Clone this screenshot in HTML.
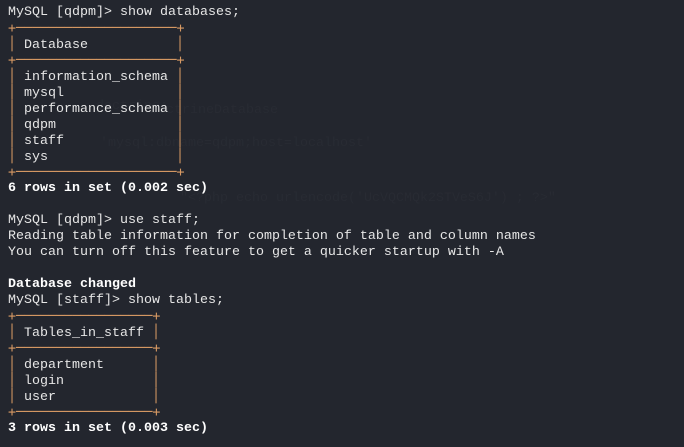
<!DOCTYPE html>
<html><head><meta charset="utf-8"><style>
html,body{margin:0;padding:0;background:#23262e;width:684px;height:447px;overflow:hidden}
#t{position:absolute;left:8px;top:5px;font-family:"Liberation Mono","DejaVu Sans Mono",monospace;font-size:13.33px;color:#e6e6e6}
#t div{height:16px;line-height:16px;white-space:pre;overflow:visible}
.o{color:#d89a64;font-family:"DejaVu Sans Mono",monospace;line-height:16px}
b{color:#fff}
.g{position:absolute;font-family:"Liberation Mono",monospace;font-size:13.33px;color:#282b33;white-space:pre}
</style></head><body>
<div class="g" style="left:96px;top:99px">doctrine:</div>
<div class="g" style="left:150px;top:103px">DoctrineDatabase</div>
<div class="g" style="left:100px;top:136px">'mysql:dbname=qdpm;host=localhost'</div>
<div class="g" style="left:180px;top:191px">"&lt;?php echo urlencode('UcVQCMQk2STVeS6J') ; ?&gt;"</div>
<div id="t">
<div>MySQL [qdpm]&gt; show databases;</div>
<div><span class="o">+────────────────────+</span></div>
<div><span class="o">│</span> Database           <span class="o">│</span></div>
<div><span class="o">+────────────────────+</span></div>
<div><span class="o">│</span> information_schema <span class="o">│</span></div>
<div><span class="o">│</span> mysql              <span class="o">│</span></div>
<div><span class="o">│</span> performance_schema <span class="o">│</span></div>
<div><span class="o">│</span> qdpm               <span class="o">│</span></div>
<div><span class="o">│</span> staff              <span class="o">│</span></div>
<div><span class="o">│</span> sys                <span class="o">│</span></div>
<div><span class="o">+────────────────────+</span></div>
<div><b>6 rows in set (0.002 sec)</b></div>
<div></div>
<div>MySQL [qdpm]&gt; use staff;</div>
<div>Reading table information for completion of table and column names</div>
<div>You can turn off this feature to get a quicker startup with -A</div>
<div></div>
<div><b>Database changed</b></div>
<div>MySQL [staff]&gt; show tables;</div>
<div><span class="o">+─────────────────+</span></div>
<div><span class="o">│</span> Tables_in_staff <span class="o">│</span></div>
<div><span class="o">+─────────────────+</span></div>
<div><span class="o">│</span> department      <span class="o">│</span></div>
<div><span class="o">│</span> login           <span class="o">│</span></div>
<div><span class="o">│</span> user            <span class="o">│</span></div>
<div><span class="o">+─────────────────+</span></div>
<div><b>3 rows in set (0.003 sec)</b></div>
</div>
</body></html>
